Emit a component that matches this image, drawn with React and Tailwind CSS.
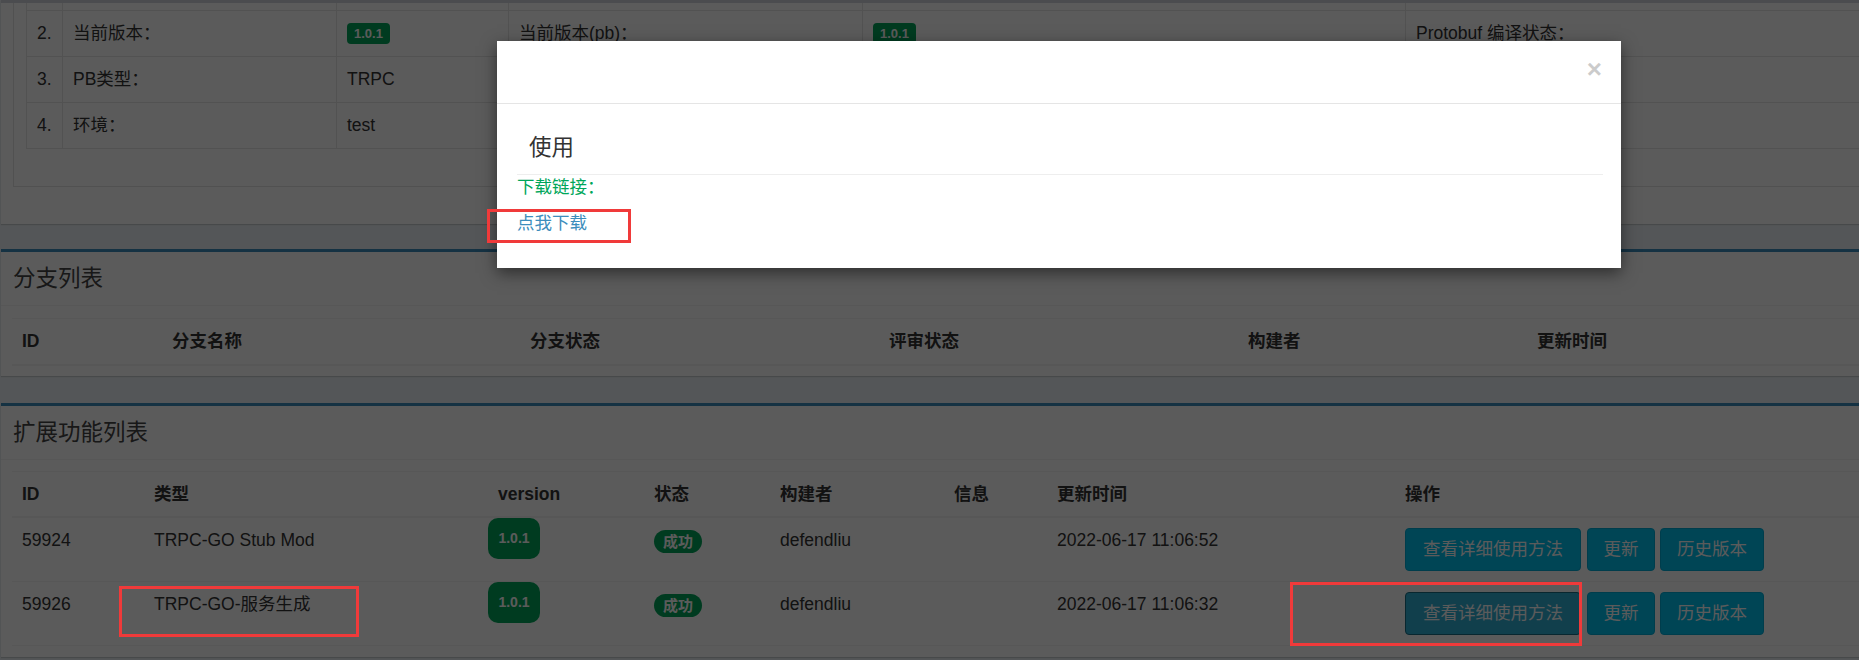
import React from 'react';

const infoCols = ['w-[36px]', 'w-[274px]', 'w-[172px]', 'w-[354px]', 'w-[543px]', 'w-[600px]'];

const SmallBadge = () => (
  <span className="inline-flex items-center h-[21px] px-[7px] rounded-[4px] bg-[#00a65a] text-white text-[13px] font-bold leading-none">
    1.0.1
  </span>
);

const infoRows = [
  ['2.', '当前版本：', <SmallBadge />, '当前版本(pb)：', <SmallBadge />, 'Protobuf 编译状态：'],
  ['3.', 'PB类型：', 'TRPC', '', '', ''],
  ['4.', '环境：', 'test', '', '', ''],
];

const branchCols = [
  { w: 'w-[150px]', label: 'ID' },
  { w: 'w-[358px]', label: '分支名称' },
  { w: 'w-[359px]', label: '分支状态' },
  { w: 'w-[359px]', label: '评审状态' },
  { w: 'w-[289px]', label: '构建者' },
  { w: 'w-[300px]', label: '更新时间' },
];

const extCols = [
  { w: 'w-[132px]', label: 'ID' },
  { w: 'w-[334px]', label: '类型' },
  { w: 'w-[166px]', label: 'version' },
  { w: 'w-[126px]', label: '状态' },
  { w: 'w-[174px]', label: '构建者' },
  { w: 'w-[103px]', label: '信息' },
  { w: 'w-[348px]', label: '更新时间' },
  { w: 'w-[400px]', label: '操作' },
];

const extRows = [
  { id: '59924', type: 'TRPC-GO Stub Mod', time: '2022-06-17 11:06:52', active: false },
  { id: '59926', type: 'TRPC-GO-服务生成', time: '2022-06-17 11:06:32', active: true },
];

const Box = ({ title, children, className }) => (
  <div className={`bg-white border-t-[3px] border-[#3c8dbc] shadow-[0_1px_1px_rgba(0,0,0,0.15)] ${className}`}>
    <div className="h-[54px] flex items-center px-[12px] border-b border-[#f4f4f4]">
      <h3 className="text-[22.5px] leading-[27px] text-[#444]">{title}</h3>
    </div>
    {children}
  </div>
);

const App = () => {
  return (
    <div className="relative w-[1859px] h-[660px] overflow-hidden bg-[#ecf0f5] text-[17.5px] leading-[25px] text-[#333] font-['Liberation_Sans','Noto_Sans_CJK_SC',sans-serif]">
      <div className="w-[2100px] pl-[1px]">
        {/* info box, top cut off */}
        <div className="bg-white border-t-[3px] border-[#d2d6de] pl-[12px] pb-[37px] shadow-[0_1px_1px_rgba(0,0,0,0.15)]">
          <div className="border-l border-b border-[#e2e2e2] pl-[12px] pb-[37px]">
            <div className="border-l border-[#e6e6e6]">
              <div className="flex h-[8px] border-b border-[#e6e6e6]">
                {infoCols.map((w, i) => (
                  <div key={i} className={`${w} shrink-0 border-r border-[#e6e6e6]`} />
                ))}
              </div>
              {infoRows.map((row, r) => (
                <div key={r} className="flex h-[46px] border-b border-[#e6e6e6]">
                  {row.map((cell, i) => (
                    <div key={i} className={`${infoCols[i]} shrink-0 border-r border-[#e6e6e6] flex items-center px-[10px]`}>
                      {cell}
                    </div>
                  ))}
                </div>
              ))}
            </div>
          </div>
        </div>

        <Box title="分支列表" className="mt-[25px]">
          <div className="pt-[12px] pb-[10px] px-[11px]">
            <div className="border-t border-[#f4f4f4]">
              <div className="flex h-[47px] border-b-2 border-[#f4f4f4] font-bold">
                {branchCols.map((c) => (
                  <div key={c.label} className={`${c.w} shrink-0 pl-[10px] flex items-center`}>{c.label}</div>
                ))}
              </div>
            </div>
          </div>
        </Box>

        <Box title="扩展功能列表" className="mt-[27px]">
          <div className="pt-[11px] pb-[11px] px-[11px]">
            <div className="border-t border-[#f4f4f4]">
              <div className="flex h-[46px] border-b-2 border-[#f4f4f4] font-bold">
                {extCols.map((c, i) => (
                  <div key={c.label} className={`${c.w} shrink-0 ${i === 2 ? 'pl-[20px]' : 'pl-[10px]'} flex items-center`}>{c.label}</div>
                ))}
              </div>
              {extRows.map((row) => (
                <div key={row.id} className="flex h-[64px] border-b border-[#f4f4f4]">
                  <div className={`${extCols[0].w} shrink-0 pl-[10px] pt-[10px]`}>{row.id}</div>
                  <div className={`${extCols[1].w} shrink-0 pl-[10px] pt-[10px]`}>{row.type}</div>
                  <div className={`${extCols[2].w} shrink-0 pl-[10px]`}>
                    <span className="flex items-center justify-center w-[52px] h-[41px] rounded-[10px] bg-[#00a65a] text-white text-[14px] font-bold">
                      1.0.1
                    </span>
                  </div>
                  <div className={`${extCols[3].w} shrink-0 pl-[10px] pt-[12px]`}>
                    <span className="flex items-center justify-center w-[48px] h-[23px] rounded-full bg-[#00a65a] text-white text-[15px] font-bold">
                      成功
                    </span>
                  </div>
                  <div className={`${extCols[4].w} shrink-0 pl-[10px] pt-[10px]`}>defendliu</div>
                  <div className={`${extCols[5].w} shrink-0 pl-[10px] pt-[10px]`} />
                  <div className={`${extCols[6].w} shrink-0 pl-[10px] pt-[10px]`}>{row.time}</div>
                  <div className={`${extCols[7].w} shrink-0 pl-[10px] pt-[10px] flex items-start`}>
                    <button
                      className={`w-[176px] h-[43px] rounded-[4px] border text-white ${
                        row.active ? 'bg-[#31b0d5] border-[#1b6d85]' : 'bg-[#00c0ef] border-[#00acd6]'
                      }`}
                    >
                      查看详细使用方法
                    </button>
                    <button className="ml-[6px] w-[68px] h-[43px] rounded-[4px] border bg-[#00c0ef] border-[#00acd6] text-white">
                      更新
                    </button>
                    <button className="ml-[5px] w-[104px] h-[43px] rounded-[4px] border bg-[#00c0ef] border-[#00acd6] text-white">
                      历史版本
                    </button>
                  </div>
                </div>
              ))}
            </div>
          </div>
        </Box>
      </div>

      {/* modal backdrop */}
      <div className="absolute inset-0 bg-[rgba(0,0,0,0.643)]" />

      {/* modal */}
      <div className="absolute left-[497px] top-[41px] w-[1124px] h-[227px] bg-white shadow-[0_5px_15px_rgba(0,0,0,0.5)]">
        <div className="h-[63px] border-b border-[#e5e5e5] flex justify-end pr-[19px] pt-[13px]">
          <span className="text-[26px] leading-[30px] font-bold text-black opacity-20">×</span>
        </div>
        <div className="pl-[20px] pr-[18px] pt-[30px]">
          <h3 className="pl-[12px] text-[22.5px] leading-[27px] text-[#333]">使用</h3>
          <div className="mt-[13px] border-t border-[#eeeeee]" />
          <p className="text-[#00a65a]">下载链接：</p>
          <a className="block mt-[11px] text-[#3c8dbc]">点我下载</a>
        </div>
      </div>

      {/* red annotation boxes */}
      <div className="absolute left-[487px] top-[209px] w-[144px] h-[34px] border-[3px] border-[#f03a3a]" />
      <div className="absolute left-[119px] top-[586px] w-[240px] h-[51px] border-[3px] border-[#f03a3a]" />
      <div className="absolute left-[1290px] top-[582px] w-[292px] h-[64px] border-[3px] border-[#f03a3a]" />
    </div>
  );
};

export default App;
